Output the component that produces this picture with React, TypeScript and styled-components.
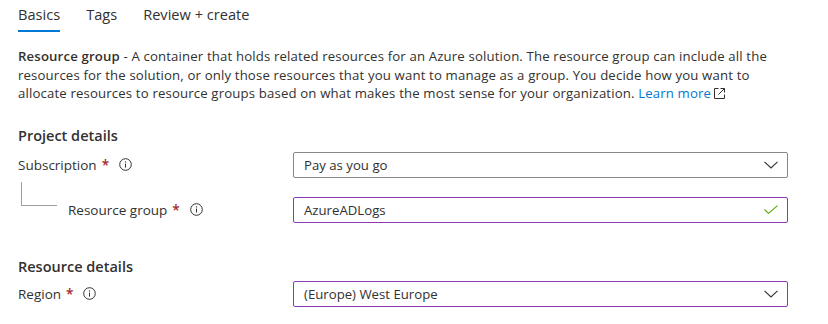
import React from "react";
import styled, { createGlobalStyle } from "styled-components";

const GlobalStyle = createGlobalStyle`
  html, body {
    margin: 0;
    padding: 0;
    background: #ffffff;
  }
  body {
    font-family: "Open Sans", "Noto Sans", sans-serif;
    color: #323130;
  }
`;

const Page = styled.div`
  width: 828px;
  height: 324px;
  padding: 0 18px;
  box-sizing: border-box;
  overflow: hidden;
`;

const TabBar = styled.div`
  display: flex;
  gap: 26px;
  height: 32px;
`;

const Tab = styled.div<{ $active?: boolean }>`
  display: flex;
  flex-direction: column;
  justify-content: space-between;
  padding-top: 4px;
  font-size: 14.6px;
  line-height: 20px;
  color: #323130;
  &::after {
    content: "";
    height: 2px;
    background: ${(p) => (p.$active ? "#0078d4" : "transparent")};
  }
`;

const Description = styled.p`
  margin: 15px 0 0;
  font-size: 13.2px;
  line-height: 18.6px;
  letter-spacing: 0.15px;
  white-space: nowrap;
  strong {
    font-weight: 600;
  }
`;

const Link = styled.a`
  color: #0078d4;
  text-decoration: none;
`;

const SectionTitle = styled.h2<{ $top: number }>`
  margin: ${(p) => p.$top}px 0 0;
  font-size: 14.5px;
  font-weight: 600;
  line-height: 20px;
`;

const Row = styled.div<{ $top: number }>`
  display: grid;
  grid-template-columns: 275px 495px;
  align-items: center;
  margin-top: ${(p) => p.$top}px;
`;

const LabelCell = styled.div<{ $nested?: boolean }>`
  display: flex;
  align-items: center;
  align-self: stretch;
  font-size: 13.5px;
  padding-left: ${(p) => (p.$nested ? "3px" : "0")};
`;

const Connector = styled.div`
  align-self: flex-start;
  width: 36px;
  height: 24px;
  margin-top: -15px;
  margin-right: 11px;
  border-left: 1px solid #a19f9d;
  border-bottom: 1px solid #a19f9d;
  box-sizing: border-box;
`;

const Star = styled.span`
  color: #a4262c;
  margin-left: 5px;
  font-weight: 600;
`;

const InfoWrap = styled.span`
  display: inline-flex;
  margin-left: 10px;
`;

const Field = styled.div<{ $valid?: boolean }>`
  display: flex;
  align-items: center;
  justify-content: space-between;
  height: 26px;
  box-sizing: border-box;
  padding: 0 9px 0 10px;
  border: 1px solid ${(p) => (p.$valid ? "#8a3aac" : "#8a8886")};
  border-radius: 2px;
  font-size: 13.2px;
`;

const InfoIcon = () => (
  <InfoWrap>
    <svg width="13" height="13" viewBox="0 0 13 13" fill="none">
      <circle cx="6.5" cy="6.5" r="5.8" stroke="#323130" strokeWidth="1" />
      <line x1="6.5" y1="5.6" x2="6.5" y2="9.6" stroke="#323130" strokeWidth="1" />
      <circle cx="6.5" cy="3.9" r="0.7" fill="#323130" />
    </svg>
  </InfoWrap>
);

const Chevron = () => (
  <svg width="14" height="8" viewBox="0 0 14 8" fill="none">
    <path d="M0.5 0.8 L7 7 L13.5 0.8" stroke="#323130" strokeWidth="1.1" />
  </svg>
);

const Check = () => (
  <svg width="14" height="9" viewBox="0 0 14 9" fill="none">
    <path d="M0.5 4.5 L4.5 8.3 L13.5 0.6" stroke="#57a300" strokeWidth="1.1" />
  </svg>
);

const ExternalIcon = () => (
  <svg width="11" height="11" viewBox="0 0 11 11" fill="none" style={{ marginLeft: 3, verticalAlign: -1 }}>
    <path d="M4.5 0.5 H0.5 V10.5 H10.5 V6.5" stroke="#323130" strokeWidth="1" />
    <path d="M6.5 0.5 H10.5 V4.5 M10.5 0.5 L4.5 6.5" stroke="#323130" strokeWidth="1" />
  </svg>
);

export default function App() {
  return (
    <Page>
      <GlobalStyle />
      <TabBar>
        <Tab $active>Basics</Tab>
        <Tab>Tags</Tab>
        <Tab>Review + create</Tab>
      </TabBar>
      <Description>
        <strong>Resource group</strong> - A container that holds related resources for an Azure solution. The resource
        group can include all the
        <br />
        resources for the solution, or only those resources that you want to manage as a group. You decide how you want to
        <br />
        allocate resources to resource groups based on what makes the most sense for your organization.{" "}
        <Link href="#">Learn more</Link>
        <ExternalIcon />
      </Description>

      <SectionTitle $top={23}>Project details</SectionTitle>
      <Row $top={6}>
        <LabelCell>
          Subscription<Star>*</Star>
          <InfoIcon />
        </LabelCell>
        <Field>
          Pay as you go
          <Chevron />
        </Field>
      </Row>
      <Row $top={19}>
        <LabelCell $nested>
          <Connector />
          Resource group<Star>*</Star>
          <InfoIcon />
        </LabelCell>
        <Field $valid>
          AzureADLogs
          <Check />
        </Field>
      </Row>

      <SectionTitle $top={34}>Resource details</SectionTitle>
      <Row $top={4}>
        <LabelCell>
          Region<Star>*</Star>
          <InfoIcon />
        </LabelCell>
        <Field $valid>
          (Europe) West Europe
          <Chevron />
        </Field>
      </Row>
    </Page>
  );
}
